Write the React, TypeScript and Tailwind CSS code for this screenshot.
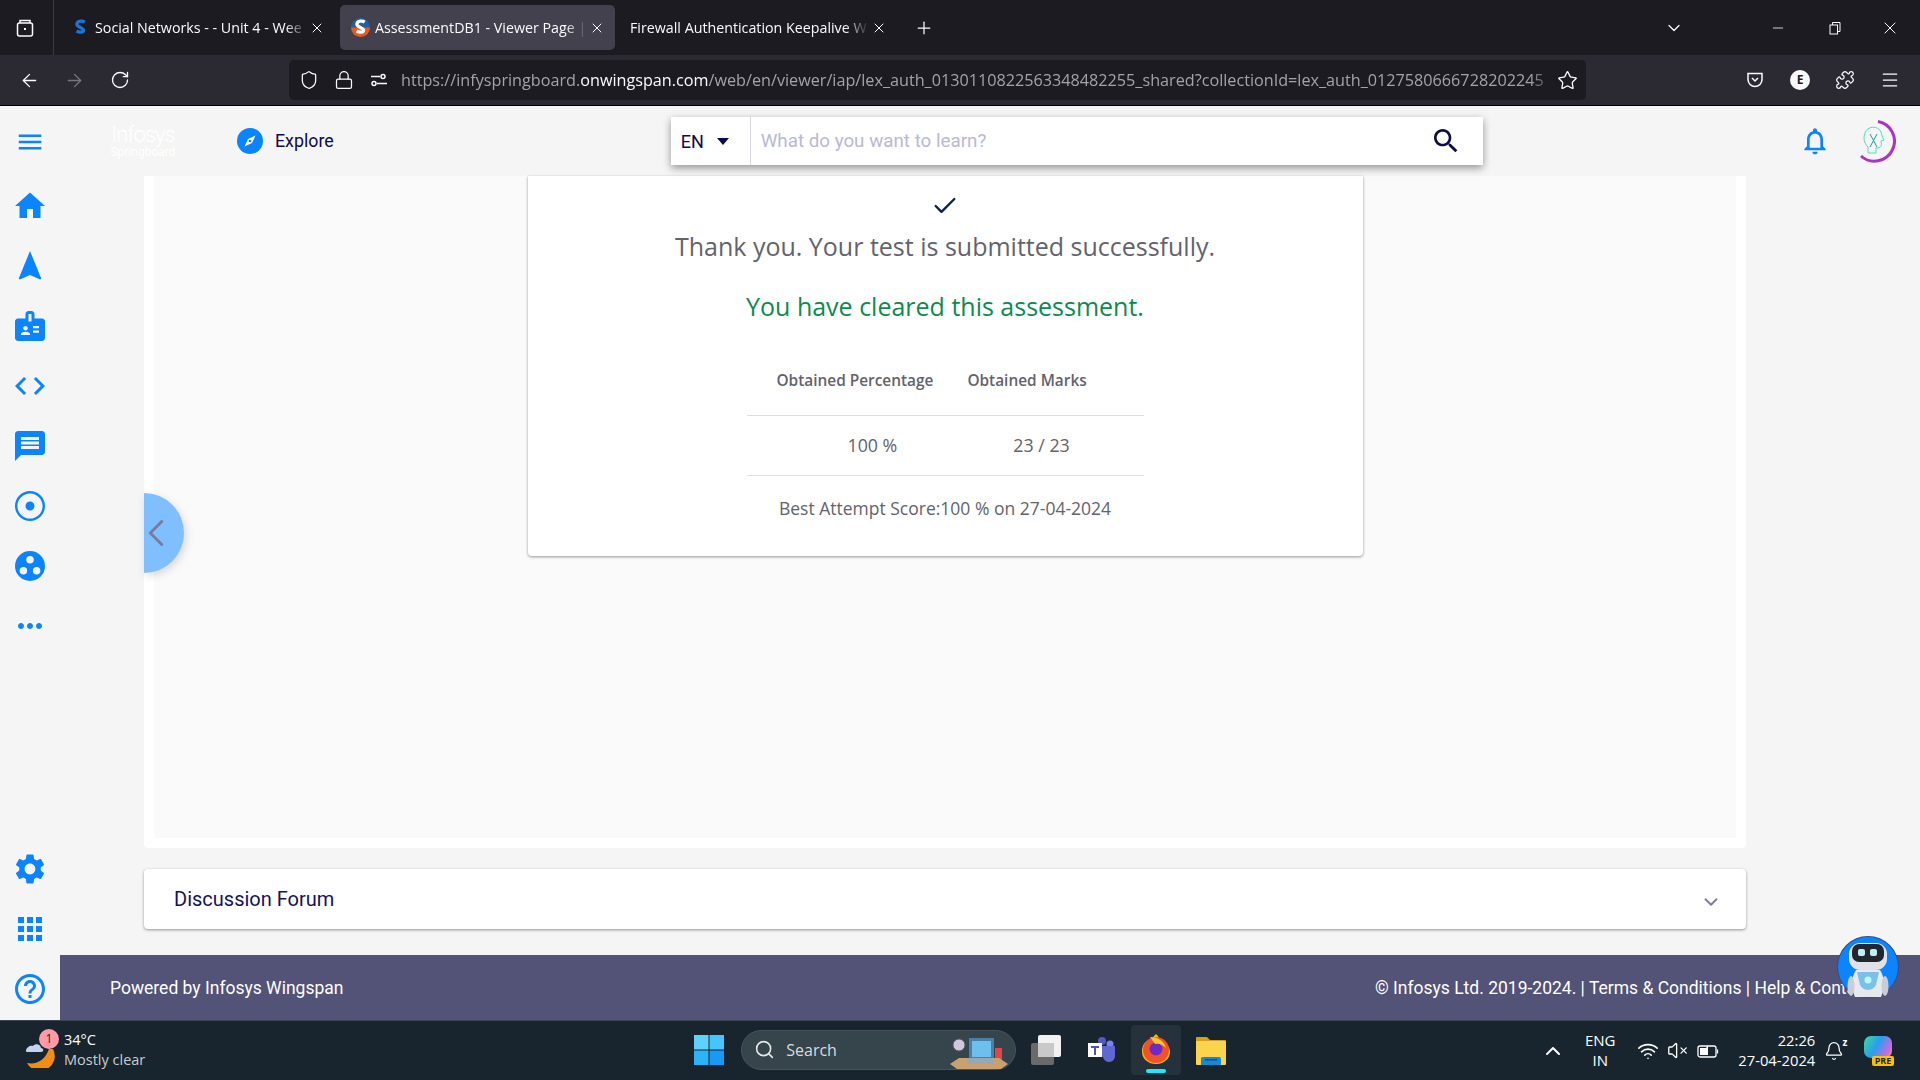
import React from 'react';
import {
  ArrowLeft,
  ArrowRight,
  RotateCw,
  Shield,
  Lock,
  Star,
  X,
  Plus,
  ChevronDown,
  ChevronUp,
  ChevronLeft,
  Minus,
  Search,
  Bell,
  Wifi,
  VolumeX,
  Puzzle,
  Menu,
  Check,
} from 'lucide-react';

const sideTop = [
  'M10 20v-6h4v6h5v-8h3L12 3 2 12h3v8z',
  'M12 2L4.5 20.29l.71.71L12 18l6.79 3 .71-.71z',
  'M20 7h-5V4c0-1.1-.9-2-2-2h-2c-1.1 0-2 .9-2 2v3H4c-1.1 0-2 .9-2 2v11c0 1.1.9 2 2 2h16c1.1 0 2-.9 2-2V9c0-1.1-.9-2-2-2zM9 12c.83 0 1.5.67 1.5 1.5S9.83 15 9 15s-1.5-.67-1.5-1.5S8.17 12 9 12zm3 6H6v-.75c0-1 2-1.5 3-1.5s3 .5 3 1.5V18zm1-9h-2V4h2v5zm5 7.5h-4V15h4v1.5zm0-3h-4V12h4v1.5z',
  'M9.4 16.6L4.8 12l4.6-4.6L8 6l-6 6 6 6 1.4-1.4zm5.2 0l4.6-4.6-4.6-4.6L16 6l6 6-6 6-1.4-1.4z',
  'M20 2H4c-1.1 0-1.99.9-1.99 2L2 22l4-4h14c1.1 0 2-.9 2-2V4c0-1.1-.9-2-2-2zm-2 12H6v-2h12v2zm0-3H6V9h12v2zm0-3H6V6h12v2z',
  'M12 9a3 3 0 1 0 0 6 3 3 0 0 0 0-6zm0-7C6.48 2 2 6.48 2 12s4.48 10 10 10 10-4.48 10-10S17.52 2 12 2zm0 18.400c-4.640 0-8.400-3.760-8.400-8.400S7.360 3.600 12 3.600s8.400 3.760 8.400 8.400-3.760 8.400-8.400 8.400z',
  'M12 2a10 10 0 1 0 0 20 10 10 0 0 0 0-20zm0 3.400a2.500 2.500 0 1 1 0 5 2.500 2.500 0 0 1 0-5zM7.600 17.600a2.500 2.500 0 1 1 0-5 2.500 2.500 0 0 1 0 5zm8.800 0a2.500 2.500 0 1 1 0-5 2.500 2.500 0 0 1 0 5z',
  'M6 10c-1.1 0-2 .9-2 2s.9 2 2 2 2-.9 2-2-.9-2-2-2zm12 0c-1.1 0-2 .9-2 2s.9 2 2 2 2-.9 2-2-.9-2-2-2zm-6 0c-1.1 0-2 .9-2 2s.9 2 2 2 2-.9 2-2-.9-2-2-2z',
];

const sideBottom = [
  'M19.14,12.94c0.04-0.3,0.06-0.61,0.06-0.94c0-0.32-0.02-0.64-0.07-0.94l2.03-1.58c0.18-0.14,0.23-0.41,0.12-0.61l-1.92-3.32c-0.12-0.22-0.37-0.29-0.59-0.22l-2.39,0.96c-0.5-0.38-1.03-0.7-1.62-0.94L14.4,2.81c-0.04-0.24-0.24-0.41-0.48-0.41h-3.84c-0.24,0-0.43,0.17-0.47,0.41L9.25,5.35C8.66,5.59,8.12,5.92,7.63,6.29L5.24,5.33c-0.22-0.08-0.47,0-0.59,0.22L2.74,8.87C2.62,9.08,2.66,9.34,2.86,9.48l2.03,1.58C4.84,11.36,4.8,11.69,4.8,12s0.02,0.64,0.07,0.94l-2.03,1.58c-0.18,0.14-0.23,0.41-0.12,0.61l1.92,3.32c0.12,0.22,0.37,0.29,0.59,0.22l2.39-0.96c0.5,0.38,1.03,0.7,1.62,0.94l0.36,2.54c0.05,0.24,0.24,0.41,0.48,0.41h3.84c0.24,0,0.44-0.17,0.47-0.41l0.36-2.54c0.59-0.24,1.13-0.56,1.62-0.94l2.39,0.96c0.22,0.08,0.47,0,0.59-0.22l1.92-3.32c0.12-0.22,0.07-0.47-0.12-0.61L19.14,12.94z M12,15.6c-1.98,0-3.6-1.62-3.6-3.6s1.62-3.6,3.6-3.6s3.6,1.62,3.6,3.6S13.98,15.6,12,15.6z',
  'M4 8h4V4H4v4zm6 12h4v-4h-4v4zm-6 0h4v-4H4v4zm0-6h4v-4H4v4zm6 0h4v-4h-4v4zm6-10v4h4V4h-4zm-6 4h4V4h-4v4zm6 6h4v-4h-4v4zm0 6h4v-4h-4v4z',
  'M11 18h2v-2h-2v2zm1-16C6.48 2 2 6.48 2 12s4.48 10 10 10 10-4.48 10-10S17.52 2 12 2zm0 18c-4.41 0-8-3.59-8-8s3.59-8 8-8 8 3.59 8 8-3.59 8-8 8zm0-14c-2.21 0-4 1.79-4 4h2c0-1.1.9-2 2-2s2 .9 2 2c0 2-3 1.75-3 5h2c0-2.25 3-2.5 3-5 0-2.21-1.79-4-4-4z',
];

function SideIcon({ d }: { d: string }) {
  return (
    <svg viewBox="0 0 24 24" className="w-9 h-9 fill-[#0a84ff]" fillRule="evenodd">
      <path d={d} />
    </svg>
  );
}

function Favicon({ active }: { active?: boolean }) {
  return (
    <svg viewBox="0 0 16 16" className="w-[19px] h-[19px] shrink-0">
      {active && <circle cx="8" cy="8" r="8" fill="#1f5fa8" />}
      {active && <path d="M0 8a8 8 0 0 0 16 0z" fill="#e8591f" />}
      <path
        d="M11.500 3.400C10 2.400 5.500 2 5 5c-.4 2.600 5.800 3.300 5.500 5.500-.2 1.700-3.500 1.700-5.800.4"
        fill="none"
        stroke={active ? '#ffffff' : '#1976d2'}
        strokeWidth="2.800"
      />
    </svg>
  );
}

function Tab({ title, active, first }: { title: string; active?: boolean; first?: boolean }) {
  return (
    <div
      className={`flex items-center h-[45px] rounded-[5px] text-[14.25px] text-[#fbfbfe] ${
        active ? 'w-[275px] bg-[#42414d] pl-[11px] pr-[10px]' : first ? 'w-[275px] pl-[11px] pr-[10px]' : 'w-[277px] pl-[10px] pr-[10px]'
      }`}
    >
      {first || active ? <Favicon active={active} /> : null}
      <span
        className={`flex-1 pt-[1px] whitespace-nowrap [mask-image:linear-gradient(to_right,black_90%,transparent)] ${
          first || active ? 'ml-[5px]' : 'ml-0'
        }`}
      >
        {title}
      </span>
      <X className="w-[16px] h-[16px] ml-[2px] shrink-0" strokeWidth={1.5} />
    </div>
  );
}

function Robot() {
  return (
    <svg viewBox="0 0 62 62" className="absolute left-[1837px] top-[936px] w-[62px] h-[62px]">
      <circle cx="31" cy="31" r="31" fill="#3c4a80" />
      <circle cx="31" cy="31" r="30" fill="#0a84ff" />
      <rect x="12" y="7" width="38" height="27" rx="11" fill="#dfe3e8" />
      <rect x="15" y="8" width="32" height="18" rx="7" fill="#23262d" />
      <rect x="21" y="13" width="7" height="7" rx="2" fill="#b8f2f8" />
      <rect x="33" y="13" width="7" height="7" rx="2" fill="#b8f2f8" />
      <path d="M19 34h24c5 8 5 18 1 27H18c-4-9-4-19 1-27z" fill="#e6e9ee" />
      <path d="M20 36h22l-3 13a9 9 0 0 1-16 0z" fill="#7cc0ea" />
      <circle cx="31" cy="44" r="3.500" fill="#b7fbff" />
      <ellipse cx="14" cy="50" rx="3.500" ry="10" fill="#c9ced6" />
      <ellipse cx="48" cy="50" rx="3.500" ry="10" fill="#c9ced6" />
    </svg>
  );
}

export default function App() {
  return (
    <div className="relative w-[1920px] h-[1080px] overflow-hidden flex flex-col bg-[#f5f5f5] font-['Roboto',sans-serif]">
      {/* Browser tabs */}
      <div className="h-[55px] shrink-0 bg-[#1c1b22] flex items-center font-['Open_Sans',sans-serif]">
        <div className="w-[54px] h-full border-r border-[#3a3944] flex items-center justify-center">
          <svg viewBox="0 0 20 20" className="w-[20px] h-[20px] ml-[-4px] fill-none stroke-[#fbfbfe]" strokeWidth="1.500">
            <rect x="2.500" y="5" width="15" height="13" rx="2" />
            <path d="M5 5V2.500h10V5" />
            <rect x="9" y="10" width="2" height="2" fill="#fbfbfe" stroke="none" />
          </svg>
        </div>
        <div className="ml-[6px] flex items-center gap-[5px]">
          <Tab first title="Social Networks - - Unit 4 - Wee" />
          <Tab active title="AssessmentDB1 - Viewer Page |" />
          <Tab title="Firewall Authentication Keepalive W" />
        </div>
        <Plus className="w-[20px] h-[20px] ml-[17px] text-[#fbfbfe]" strokeWidth={1.5} />
        <ChevronDown className="w-[20px] h-[20px] ml-[730px] text-[#fbfbfe]" strokeWidth={1.5} />
        <Minus className="w-[16px] h-[16px] ml-[86px] text-[#fbfbfe]" strokeWidth={1.2} />
        <svg viewBox="0 0 14 14" className="w-[14px] h-[14px] ml-[42px] fill-none stroke-[#fbfbfe]">
          <rect x="2" y="4" width="7.500" height="9" />
          <path d="M4.500 4V1.500h7.500v9H9.500" />
        </svg>
        <X className="w-[20px] h-[20px] ml-[38px] text-[#fbfbfe]" strokeWidth={1.2} />
      </div>

      {/* Browser toolbar */}
      <div className="h-[51px] shrink-0 bg-[#2b2a33] border-b border-black flex items-center font-['Open_Sans',sans-serif] text-[#fbfbfe]">
        <ArrowLeft className="w-[21px] h-[21px] ml-[19px]" strokeWidth={1.5} />
        <ArrowRight className="w-[21px] h-[21px] ml-[24px] text-[#77767e]" strokeWidth={1.5} />
        <RotateCw className="w-[20px] h-[20px] ml-[25px]" strokeWidth={1.6} />
        <div className="ml-[159px] w-[1297px] h-[40px] rounded-[5px] bg-[#1c1b22] flex items-center">
          <Shield className="w-[20px] h-[20px] ml-[10px] shrink-0" strokeWidth={1.5} />
          <Lock className="w-[20px] h-[20px] ml-[15px] shrink-0" strokeWidth={1.5} />
          <svg viewBox="0 0 20 20" className="w-[20px] h-[20px] ml-[15px] shrink-0 fill-none stroke-[#fbfbfe]" strokeWidth="1.500">
            <circle cx="14" cy="6.500" r="2" />
            <path d="M2 6.500h9" />
            <circle cx="5" cy="13.500" r="2" />
            <path d="M8 13.500h10" />
          </svg>
          <div className="ml-[12px] w-[1153px] text-[16.2px] whitespace-nowrap text-[#a3a3a8] [mask-image:linear-gradient(to_right,black_98%,transparent)]">
            https://infyspringboard.<span className="text-[#fbfbfe]">onwingspan.com</span>
            /web/en/viewer/iap/lex_auth_0130110822563348482255_shared?collectionId=lex_auth_0127580666728202245
          </div>
          <Star className="w-[21px] h-[21px] ml-[3px] shrink-0" strokeWidth={1.5} />
        </div>
        <svg viewBox="0 0 20 20" className="w-[20px] h-[20px] ml-[159px] fill-none stroke-[#fbfbfe]" strokeWidth="1.500">
          <path d="M3 3.500h14v6a7 7 0 0 1-14 0z" />
          <path d="M7 8l3 3 3-3" />
        </svg>
        <div className="w-[20px] h-[20px] ml-[25px] rounded-full bg-[#fbfbfe] text-[#1c1b22] text-[12px] font-bold flex items-center justify-center">
          E
        </div>
        <Puzzle className="w-[20px] h-[20px] ml-[25px]" strokeWidth={1.5} />
        <Menu className="w-[20px] h-[20px] ml-[25px]" strokeWidth={1.5} />
      </div>

      {/* Site header */}
      <div className="h-[70px] shrink-0 flex items-center relative z-10">
        <svg viewBox="0 0 24 24" className="w-[30px] h-[30px] ml-[15px] mt-[2px] fill-[#0a84ff]">
          <path d="M3 18h18v-2H3v2zm0-5h18v-2H3v2zm0-7v2h18V6H3z" />
        </svg>
        <div className="ml-[68px] w-[60px] flex flex-col items-center text-white leading-none">
          <span className="text-[22px] font-light tracking-[-1px]">Infosys</span>
          <span className="text-[12px]">Springboard</span>
        </div>
        <svg viewBox="0 0 26 26" className="ml-[64px] w-[26px] h-[26px]">
          <circle cx="13" cy="13" r="13" fill="#0a84ff" />
          <path d="M18.500 7.500L15 15l-7.500 3.500L11 11z" fill="#ffffff" />
          <circle cx="13" cy="13" r="1.300" fill="#0a84ff" />
        </svg>
        <span className="ml-[12px] pt-[1px] text-[17.800px] text-[#0d0b4d]">Explore</span>
        <div className="ml-[337px] w-[812px] h-[48px] bg-white flex items-center shadow-[0_3px_8px_rgba(0,0,0,0.4)]">
          <div className="w-[80px] h-full border-r border-[#d8d8e0] flex items-center pl-[10px] text-[18px] text-[#0d0b4d]">
            EN
            <span className="ml-[13px] w-0 h-0 border-x-[6px] border-x-transparent border-t-[7px] border-t-[#0d0b4d]" />
          </div>
          <span className="ml-[10px] pt-[1px] flex-1 text-[18.800px] text-[#b9b9d2]">What do you want to learn?</span>
          <svg viewBox="0 0 24 24" className="w-[32px] h-[32px] mr-[21px] fill-[#0d0b4d]">
            <path d="M15.500 14h-.79l-.28-.27C15.410 12.590 16 11.110 16 9.500 16 5.910 13.090 3 9.500 3S3 5.910 3 9.500 5.910 16 9.500 16c1.610 0 3.090-.59 4.230-1.570l.27.28v.79l5 4.990L20.490 19l-4.990-5zm-6 0C7.010 14 5 11.990 5 9.500S7.010 5 9.500 5 14 7.010 14 9.500 11.990 14 9.500 14z" />
          </svg>
        </div>
        <svg viewBox="0 0 24 24" className="ml-[316px] w-[32px] h-[32px] fill-[#0a84ff]">
          <path d="M12 22c1.100 0 2-.9 2-2h-4c0 1.100.9 2 2 2zm6-6v-5c0-3.070-1.630-5.640-4.500-6.320V4c0-.83-.67-1.500-1.500-1.500s-1.500.67-1.500 1.500v.68C7.640 5.360 6 7.920 6 11v5l-2 2v1h16v-1l-2-2zm-2 1H8v-6c0-2.480 1.510-4.500 4-4.500s4 2.020 4 4.500v6z" />
        </svg>
        <svg viewBox="0 0 44 44" className="ml-[21px] w-[44px] h-[44px] fill-none">
          <path d="M26 2.500A20 20 0 1 1 9 37" stroke="#a935c6" strokeWidth="3" />
          <path d="M13 14c2-7 13-8 16-1 1 3 1 5 3 8l-3 1c1 5 0 7-5 7v5H16v-6c-4-4-5-9-3-14z" stroke="#4fe0ba" strokeWidth="1" />
          <path d="M18 15l7 13M25 15l-7 13" stroke="#1f9e8a" strokeWidth="1" />
        </svg>
      </div>

      {/* Sidebar and page */}
      <div className="flex-1 flex min-h-0">
        <div className="w-[60px] shrink-0 flex flex-col items-center pt-[12px] pb-[13px]">
          <div className="flex flex-col gap-[24px] items-center">
            {sideTop.map((d, i) => (
              <SideIcon key={i} d={d} />
            ))}
          </div>
          <div className="mt-auto flex flex-col gap-[24px] items-center">
            {sideBottom.map((d, i) => (
              <SideIcon key={i} d={d} />
            ))}
          </div>
        </div>

        <div className="flex-1 flex flex-col min-w-0">
          <div className="flex-1 flex flex-col pl-[84px] pr-[174px]">
            <div className="h-[672px] shrink-0 bg-white px-[10px] pb-[10px] rounded-b-[4px] flex flex-col">
              <div className="flex-1 bg-[#fafafa] flex justify-center">
                <div className="w-[835px] h-[380px] bg-white rounded-b-[4px] shadow-[0_1px_3px_rgba(0,0,0,0.4)] flex flex-col items-center font-['Open_Sans',sans-serif] text-[#63636b]">
                  <Check className="mt-[16px] w-[28px] h-[28px] text-[#0d1f4d]" strokeWidth={2} />
                  <p className="mt-[8px] text-[25px] leading-[36px]">Thank you. Your test is submitted successfully.</p>
                  <p className="mt-[24px] text-[25px] leading-[36px] text-[#0f8a4f]">You have cleared this assessment.</p>
                  <div className="mt-[30px] w-[397px]">
                    <div className="h-[62px] border-b border-[#dfdfe3] flex pl-[30px] gap-[34px] pt-[15px] text-[15.400px] font-semibold">
                      <span>Obtained Percentage</span>
                      <span>Obtained Marks</span>
                    </div>
                    <div className="h-[60px] border-b border-[#dfdfe3] flex items-center pl-[101px] gap-[116px] text-[17.800px]">
                      <span>100 %</span>
                      <span>23 / 23</span>
                    </div>
                  </div>
                  <p className="mt-[19px] text-[17.500px] leading-[26px]">Best Attempt Score:100 % on 27-04-2024</p>
                </div>
              </div>
            </div>
            <div className="mt-[21px] h-[60px] shrink-0 bg-white rounded-[4px] shadow-[0_1px_3px_rgba(0,0,0,0.4)] flex items-center justify-between pl-[30px] pr-[24px]">
              <span className="text-[20px] text-[#14125c]">Discussion Forum</span>
              <ChevronDown className="w-[22px] h-[22px] mt-[6px] text-[#7a7a9f]" strokeWidth={2} />
            </div>
          </div>
          <div className="h-[65px] shrink-0 bg-[#535277] flex items-center justify-between pl-[50px] pr-[49px] pt-[1px] text-[17.500px] text-white">
            <span>Powered by Infosys Wingspan</span>
            <span>© Infosys Ltd. 2019-2024. | Terms &amp; Conditions | Help &amp; Contact</span>
          </div>
        </div>
      </div>

      {/* Windows taskbar */}
      <div className="h-[60px] shrink-0 bg-[#18252f] border-t border-[#3c4650] flex items-center text-white font-['Open_Sans',sans-serif]">
        <div className="relative ml-[25px] w-[30px] h-[34px]">
          <svg viewBox="0 0 30 34" className="w-[30px] h-[34px]">
            <path d="M28 15a14 14 0 0 1-26 14c10 2 18-3 22-14z" fill="#f28c16" />
            <path d="M1 17c0-4 5-6 7-5 2-3 8-2 8 2 3 0 3 4 0 4H3c-1 0-2 0-2-1z" fill="#c4d4ec" />
          </svg>
          <div className="absolute left-[14px] top-[-5px] w-[20px] h-[20px] rounded-full bg-[#ff9aa6] text-[#18252f] text-[12px] flex items-center justify-center">
            1
          </div>
        </div>
        <div className="ml-[9px] mb-[2px] text-[14.500px] leading-[20px]">
          <div>34°C</div>
          <div className="text-[#c8cdd1]">Mostly clear</div>
        </div>
        <svg viewBox="0 0 30 30" className="ml-[549px] mb-[2px] w-[30px] h-[30px]">
          <rect width="14.500" height="14.500" fill="#5ed2fc" />
          <rect x="15.500" width="14.500" height="14.500" fill="#45c5fb" />
          <rect y="15.500" width="14.500" height="14.500" fill="#2cb3f8" />
          <rect x="15.500" y="15.500" width="14.500" height="14.500" fill="#1a98f5" />
        </svg>
        <div className="ml-[17px] mb-[2px] w-[275px] h-[40px] rounded-full bg-[#36444c] border border-[#46535b] flex items-center relative">
          <Search className="ml-[12px] w-[21px] h-[21px] text-[#e5e8ea]" strokeWidth={1.8} />
          <span className="ml-[11px] text-[16px] text-[#d8dcdf]">Search</span>
          <svg viewBox="0 0 60 38" className="absolute right-[6px] top-[3px] w-[60px] h-[38px]">
            <circle cx="10" cy="11" r="6" fill="#cfc8dc" stroke="#5c5470" />
            <rect x="20" y="4" width="25" height="22" fill="#4c7fa8" />
            <rect x="23" y="7" width="19" height="16" fill="#6cc0ee" />
            <rect x="46" y="14" width="7" height="12" fill="#e0474c" />
            <path d="M1 30l9-6h40l9 6-7 5H8z" fill="#c9a070" />
            <rect x="18" y="24" width="26" height="6" fill="#9aa5b5" />
          </svg>
        </div>
        <svg viewBox="0 0 30 30" className="ml-[15px] mb-[2px] w-[30px] h-[30px]">
          <rect y="8" width="23" height="22" rx="2" fill="#6a6a6a" />
          <rect x="7" width="23" height="22" rx="2" fill="#f2f2f2" />
          <rect x="7" y="8" width="16" height="14" fill="#c9c9c9" />
        </svg>
        <svg viewBox="0 0 28 28" className="ml-[27px] mb-[2px] w-[28px] h-[28px]">
          <circle cx="22" cy="8" r="3.500" fill="#7b83eb" />
          <circle cx="14" cy="5" r="4" fill="#5059c9" />
          <path d="M10 10h17v9a6 6 0 0 1-12 2 7 7 0 0 1-5-4z" fill="#5f67d0" />
          <rect y="7" width="14" height="14" fill="#ffffff" />
          <path d="M3 10h8v2H8v7H6v-7H3z" fill="#4b53bc" />
        </svg>
        <div className="ml-[15px] mb-[2px] w-[50px] h-[50px] rounded-[4px] bg-[#25323b] relative flex items-center justify-center">
          <svg viewBox="0 0 30 32" className="w-[30px] h-[32px] mt-[-4px]">
            <path d="M15 2c3 3 4 5 4 7 5 0 10 5 10 11a14 12 0 0 1-28 0c0-6 2-9 5-11 0 2 1 3 2 3 1-4 4-7 7-10z" fill="#ffb21a" />
            <circle cx="15" cy="18" r="13" fill="#f0532a" />
            <circle cx="15" cy="17" r="6.500" fill="#6d2bc4" />
            <path d="M9 5c6 0 14 3 16 11-3-3-7-5-11-4z" fill="#ffc531" />
          </svg>
          <div className="absolute bottom-[2px] left-[15px] w-[20px] h-[4px] rounded-full bg-[#26e8f2]" />
        </div>
        <svg viewBox="0 0 30 30" className="ml-[15px] mb-[2px] w-[30px] h-[30px]">
          <path d="M0 3a1 1 0 0 1 1-1h10l3 3h15a1 1 0 0 1 1 1v3H0z" fill="#d4a017" />
          <rect y="6" width="30" height="24" rx="1" fill="#fcd34d" />
          <path d="M5 30v-6a2 2 0 0 1 2-2h16a2 2 0 0 1 2 2v6z" fill="#1688d8" />
          <rect x="9" y="24" width="12" height="1.500" fill="#0d4f8a" />
        </svg>
        <ChevronUp className="ml-[315px] w-[24px] h-[24px]" strokeWidth={2} />
        <div className="ml-[10px] mb-[2px] w-[50px] text-center text-[15px] leading-[20px]">
          <div>ENG</div>
          <div>IN</div>
        </div>
        <Wifi className="ml-[12px] w-[22px] h-[22px]" strokeWidth={1.8} />
        <VolumeX className="ml-[8px] w-[21px] h-[21px]" strokeWidth={1.5} />
        <svg viewBox="0 0 22 16" className="ml-[9px] w-[22px] h-[16px] fill-none stroke-white" strokeWidth="1.300">
          <rect x="1" y="3" width="18" height="11" rx="2" />
          <path d="M3 5h6l2-3v10H3z" fill="#ffffff" stroke="none" />
          <path d="M20.500 6.500v4" />
        </svg>
        <div className="ml-[16px] mb-[2px] w-[80px] text-right text-[14.750px] leading-[20px]">
          <div>22:26</div>
          <div>27-04-2024</div>
        </div>
        <div className="relative ml-[9px] w-[20px] h-[20px]">
          <Bell className="w-[20px] h-[20px]" strokeWidth={1.5} />
          <span className="absolute right-[-3px] top-[-6px] text-[10px] font-bold">z</span>
        </div>
        <div className="relative ml-[20px] w-[30px] h-[30px]">
          <div className="w-[28px] h-[22px] rounded-[7px] bg-[linear-gradient(120deg,#3dd9a0,#2a9df0_45%,#c86be0_80%,#f08aa0)]" />
          <div className="absolute right-0 bottom-0 px-[3px] h-[10px] rounded-[2px] bg-[#ffc000] text-[9px] leading-[10px] font-bold text-[#18252f]">
            PRE
          </div>
        </div>
      </div>

      {/* Collapse tab over the content panel */}
      <div className="absolute left-[144px] top-[493px] w-[40px] h-[80px] rounded-r-full bg-[#80bfff] shadow-[2px_3px_8px_rgba(0,0,0,0.15)] flex items-center">
        <ChevronLeft className="w-[46px] h-[46px] ml-[-11px] shrink-0 text-[#7a7a9f]" strokeWidth={1.5} />
      </div>
      <Robot />
    </div>
  );
}
